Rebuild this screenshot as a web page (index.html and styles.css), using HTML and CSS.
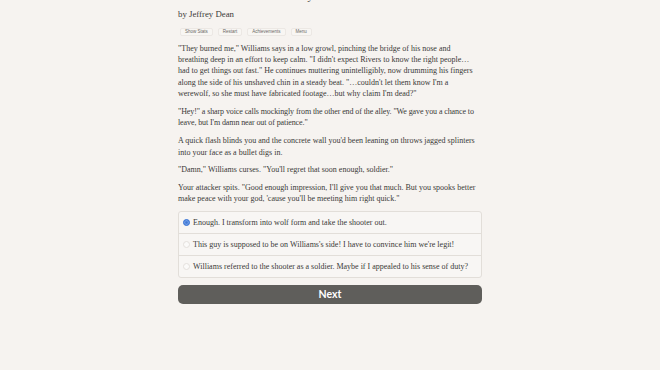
FILE: index.html
```html
<!DOCTYPE html>
<html>
<head>
<meta charset="utf-8">
<link rel="stylesheet" href="styles.css">
</head>
<body>
<div class="page">
  <h1 class="title">Werewolves 2: Pack Mentality</h1>
  <div class="author">by Jeffrey Dean</div>
  <div class="buttons">
    <button class="btn">Show Stats</button>
    <button class="btn">Restart</button>
    <button class="btn">Achievements</button>
    <button class="btn">Menu</button>
  </div>
  <div class="story">
    <p>"They burned me," Williams says in a low growl, pinching the bridge of his nose and breathing deep in an effort to keep calm. "I didn't expect Rivers to know the right people… had to get things out fast." He continues muttering unintelligibly, now drumming his fingers along the side of his unshaved chin in a steady beat. "…couldn't let them know I'm a werewolf, so she must have fabricated footage…but why claim I'm dead?"</p>
    <p class="tight">"Hey!" a sharp voice calls mockingly from the other end of the alley. "We gave you a chance to leave, but I'm damn near out of patience."</p>
    <p class="short">A quick flash blinds you and the concrete wall you'd been leaning on throws jagged splinters into your face as a bullet digs in.</p>
    <p>"Damn," Williams curses. "You'll regret that soon enough, soldier."</p>
    <p>Your attacker spits. "Good enough impression, I'll give you that much. But you spooks better make peace with your god, 'cause you'll be meeting him right quick."</p>
  </div>
  <div class="choices">
    <label class="choice"><span class="radio checked"></span>Enough. I transform into wolf form and take the shooter out.</label>
    <label class="choice"><span class="radio"></span>This guy is supposed to be on Williams's side! I have to convince him we're legit!</label>
    <label class="choice"><span class="radio"></span>Williams referred to the shooter as a soldier. Maybe if I appealed to his sense of duty?</label>
  </div>
  <button class="next">Next</button>
</div>
</body>
</html>
```
FILE: styles.css
```css
html, body {
  margin: 0;
  padding: 0;
  background: #f6f3f0;
}
body {
  font-family: "Liberation Serif", "DejaVu Serif", serif;
  color: #3b3a38;
  overflow: hidden;
}
.page {
  width: 304px;
  margin: 0 auto;
}
.title {
  font-size: 11px;
  font-weight: normal;
  line-height: 12px;
  margin: -10px 0 0 0;
  height: 12px;
  white-space: nowrap;
  color: #3b3a38;
}
.author {
  font-size: 8.8px;
  line-height: 12px;
  margin-top: 6px;
}
.buttons {
  display: flex;
  gap: 5px;
  margin-top: 8px;
  margin-left: 2px;
}
.btn {
  font-family: "Liberation Sans", Arial, sans-serif;
  font-size: 4.5px;
  line-height: 6px;
  height: 8px;
  padding: 0 4px;
  border: 1px solid #ece8e4;
  border-radius: 2px;
  background: #f8f6f3;
  color: #6a6864;
}
.story {
  margin-top: 7px;
}
.story p {
  font-size: 8px;
  line-height: 11.2px;
  margin: 0 0 7px 0;
}
.story p.tight {
  letter-spacing: -0.1px;
}
.story p.short {
  margin-bottom: 6px;
}
.story p:last-child {
  margin-bottom: 0;
}
.choices {
  margin-top: 6.5px;
  border: 1px solid #e2ded9;
  border-radius: 3px;
  background: #f8f6f4;
}
.choice {
  display: flex;
  align-items: center;
  height: 21px;
  padding-left: 4px;
  font-size: 8px;
  border-top: 1px solid #e2ded9;
}
.choice:first-child {
  border-top: none;
}
.radio {
  width: 5px;
  height: 5px;
  border-radius: 50%;
  border: 0.5px solid #e4e0dc;
  background: #fbfaf9;
  margin-right: 3px;
  flex: none;
}
.radio.checked {
  background: #3f78d6;
  border-color: #3f78d6;
  box-shadow: inset 0 0 0 1.2px #6f9ce6;
}
.next {
  display: block;
  width: 304px;
  height: 19px;
  margin-top: 7px;
  border: none;
  border-radius: 5px;
  background: #5f5e5b;
  color: #ffffff;
  font-family: Lato, "Liberation Sans", sans-serif;
  font-weight: bold;
  font-size: 10.5px;
  padding: 0;
}
```
